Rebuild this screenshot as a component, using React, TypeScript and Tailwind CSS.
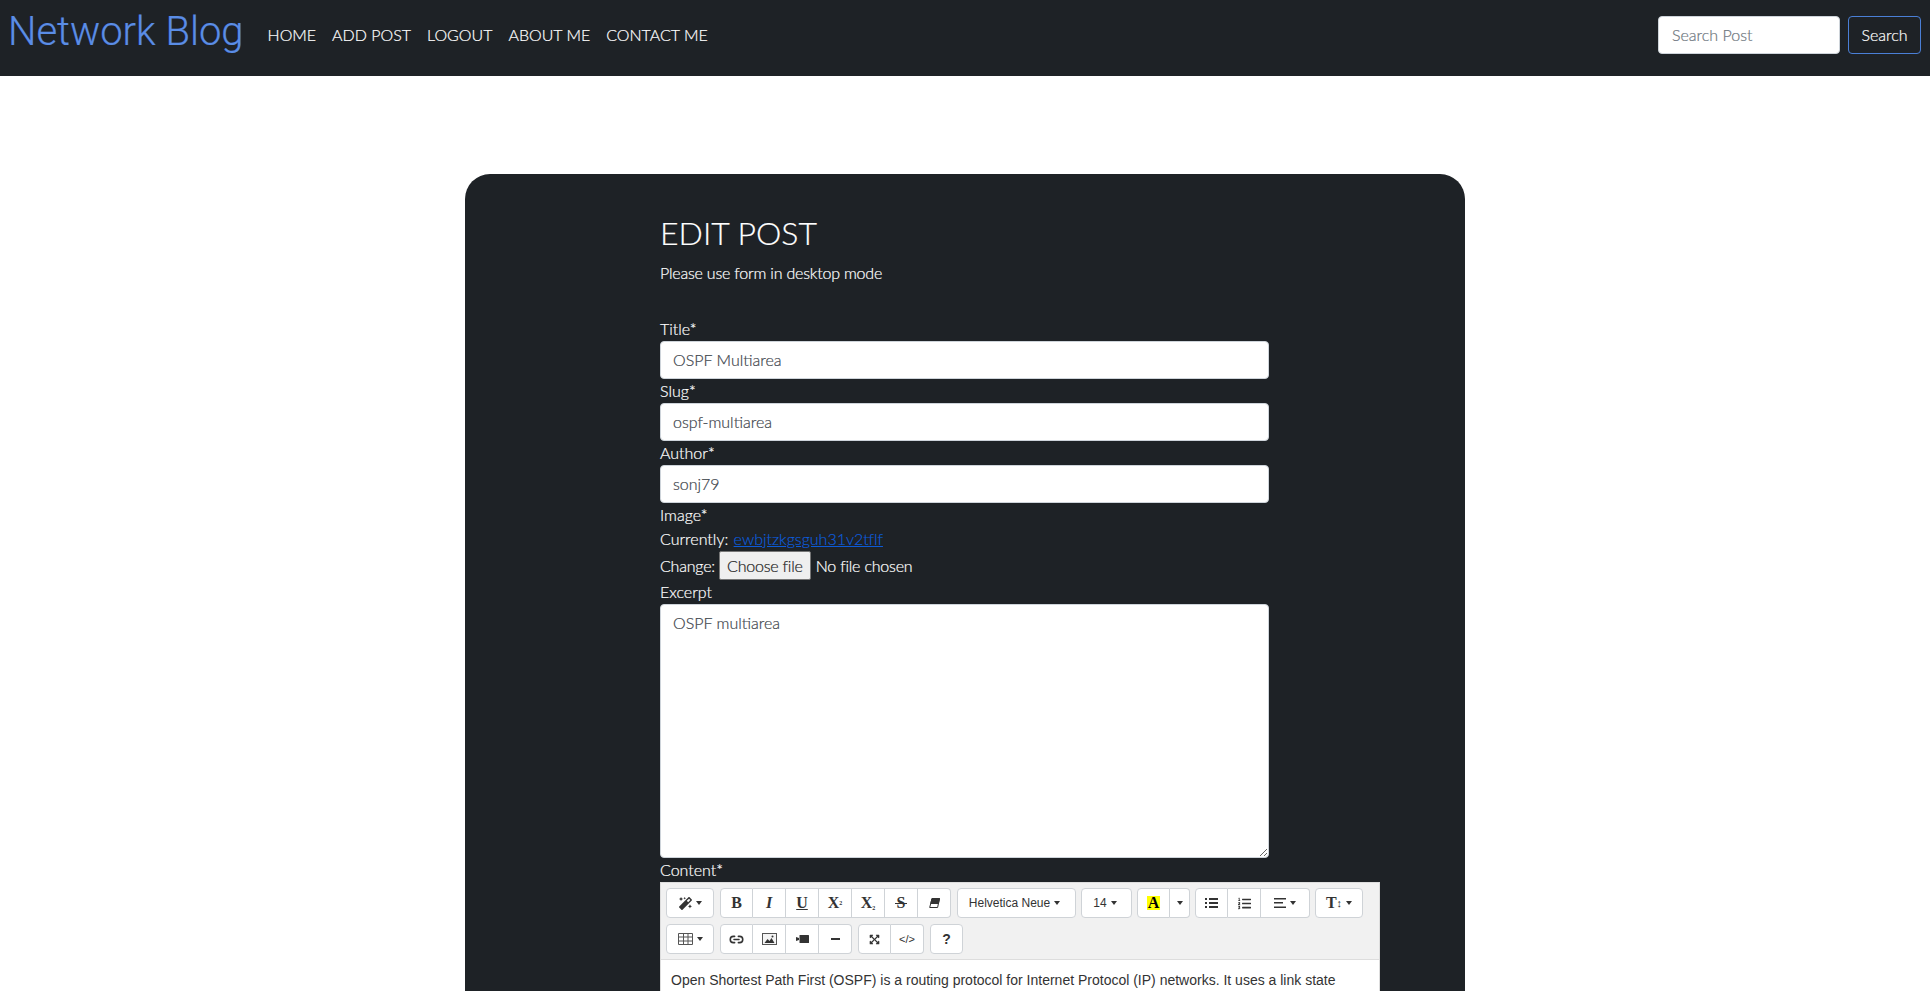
import React from 'react';
import { FaMagic, FaListOl, FaExpandArrowsAlt } from 'react-icons/fa';
import { Link2 } from 'lucide-react';

const Caret = () => (
    <span className="inline-block w-0 h-0 border-x-[3.5px] border-x-transparent border-t-[4px] border-t-[#333]" />
);

const serif = "font-['Liberation_Serif',serif] font-bold text-[#333] text-[16px]";
const sans = "font-['Liberation_Sans',sans-serif] font-normal text-[#333]";

const TableIcon = () => (
    <svg width="15" height="12" viewBox="0 0 15 12" fill="none" stroke="#555" strokeWidth="1">
        <path d="M.5.5h14v11H.5zM.5 4h14M.5 8h14M5.5.5v11M10 .5v11" />
    </svg>
);

const EraserIcon = () => (
    <svg width="11" height="10" viewBox="0 0 11 10">
        <path d="M3 .5h7.5L8.6 9.5H.7z" fill="#fff" stroke="#333" />
        <path d="M3 .5h7.5L9.4 5.5H1.8z" fill="#333" stroke="#333" />
    </svg>
);

const ImageIcon = () => (
    <svg width="15" height="12" viewBox="0 0 15 12">
        <rect x=".5" y=".5" width="14" height="11" fill="#f4f4f4" stroke="#555" />
        <path d="M2.5 10l3-4 2 2 2-3 3 5z" fill="#333" />
        <circle cx="10.5" cy="3.5" r="1" fill="#333" />
    </svg>
);

const VideoIcon = () => (
    <svg width="13" height="8" viewBox="0 0 13 8" fill="#333">
        <path d="M0 2l3 1v2L0 6z" />
        <rect x="3.5" y="0" width="9.5" height="8" rx=".5" />
    </svg>
);

const MinusIcon = () => (
    <svg width="9" height="2" viewBox="0 0 9 2" fill="#333"><rect width="9" height="2" /></svg>
);

const BulletsIcon = () => (
    <svg width="13" height="10" viewBox="0 0 13 10" fill="#333">
        <path d="M0 0h2v2H0zM0 4h2v2H0zM0 8h2v2H0zM4 0h9v2H4zM4 4h9v2H4zM4 8h9v2H4z" />
    </svg>
);

const AlignIcon = () => (
    <svg width="12" height="10" viewBox="0 0 12 10" fill="#333">
        <path d="M0 0h12v1.5H0zM0 4h9v1.5H0zM0 8.5h12V10H0z" />
    </svg>
);

// one toolbar button, group decides which corners are rounded
const Btn = ({ w = 'w-[33px]', first, last, children }: { w?: string; first?: boolean; last?: boolean; children: React.ReactNode }) => (
    <button
        type="button"
        className={`${w} h-[30px] shrink-0 flex items-center justify-center gap-1 bg-white border-y border-r border-[#cfd3d7] ${first ? 'border-l rounded-l-[4px]' : ''} ${last ? 'rounded-r-[4px]' : ''}`}
    >
        {children}
    </button>
);

const Field = ({ label, value }: { label: string; value: string }) => (
    <div>
        <label className="block h-[24px] leading-[24px]">{label}</label>
        <input
            readOnly
            value={value}
            className="block w-full h-[38px] px-[12px] pb-[2px] rounded-[4px] bg-white border border-[#ced4da] text-[#3d444b] outline-none"
        />
    </div>
);

const Toolbar = () => (
    <div className="bg-[#f1f1f1] border-b border-[#ddd] pl-[5px] pt-[5px] pb-[5px] flex flex-col gap-[6px] [-webkit-text-stroke:0]">
        <div className="flex">
            <Btn w="w-[48px]" first last><FaMagic size={13} className="text-[#333]" /><Caret /></Btn>
            <div className="flex ml-[6px]">
                <Btn first><span className={serif}>B</span></Btn>
                <Btn><span className={`${serif} italic`}>I</span></Btn>
                <Btn><span className={`${serif} underline`}>U</span></Btn>
                <Btn><span className={serif}>X<sup className="text-[6px]">2</sup></span></Btn>
                <Btn><span className={serif}>X<sub className="text-[6px]">2</sub></span></Btn>
                <Btn>
                    <span className={`${serif} relative px-[2px]`}>
                        S
                        <span className="absolute left-0 right-0 top-[50%] h-px bg-[#333]" />
                    </span>
                </Btn>
                <Btn last><EraserIcon /></Btn>
            </div>
            <div className="ml-[6px]">
                <Btn w="w-[119px] pr-[4px]" first last><span className={`${sans} text-[12px]`}>Helvetica Neue</span><Caret /></Btn>
            </div>
            <div className="ml-[5px]">
                <Btn w="w-[51px] pr-[3px]" first last><span className={`${sans} text-[12px]`}>14</span><Caret /></Btn>
            </div>
            <div className="flex ml-[5px]">
                <Btn first><span className={`${serif} leading-[14px] bg-[#ffff00] px-[1px] text-black`}>A</span></Btn>
                <Btn w="w-[20px]" last><Caret /></Btn>
            </div>
            <div className="flex ml-[5px]">
                <Btn first><BulletsIcon /></Btn>
                <Btn><FaListOl size={13} className="text-[#333]" /></Btn>
                <Btn w="w-[49px]" last><AlignIcon /><Caret /></Btn>
            </div>
            <div className="ml-[5px]">
                <Btn w="w-[48px]" first last>
                    <span className={`${serif} flex items-center`}>T<span className="text-[11px] font-normal">↕</span></span>
                    <Caret />
                </Btn>
            </div>
        </div>
        <div className="flex">
            <Btn w="w-[48px]" first last><TableIcon /><Caret /></Btn>
            <div className="flex ml-[6px]">
                <Btn first><Link2 size={15} strokeWidth={2.5} className="text-[#333]" /></Btn>
                <Btn><ImageIcon /></Btn>
                <Btn><VideoIcon /></Btn>
                <Btn last><MinusIcon /></Btn>
            </div>
            <div className="flex ml-[6px]">
                <Btn first><FaExpandArrowsAlt size={11} className="text-[#333]" /></Btn>
                <Btn last><span className={`${sans} text-[11px]`}>&lt;/&gt;</span></Btn>
            </div>
            <div className="ml-[6px]">
                <Btn first last><span className={`${sans} !font-bold text-[14px]`}>?</span></Btn>
            </div>
        </div>
    </div>
);

export default function App() {
    return (
        <div className="h-screen overflow-hidden bg-white font-['Lato',sans-serif] font-light text-[16px] leading-[24px] [-webkit-text-stroke:0.2px]">
            <nav className="h-[76px] bg-[#1e2226] flex items-center px-2 pb-[6px]">
                <a className="font-['Roboto',sans-serif] font-light text-[40px] leading-[48px] text-[#5a8de6] mr-6 mb-[7px]">Network Blog</a>
                <ul className="flex gap-[16px] text-white uppercase">
                    <li>Home</li>
                    <li>Add Post</li>
                    <li>Logout</li>
                    <li>About Me</li>
                    <li>Contact Me</li>
                </ul>
                <form className="ml-auto flex gap-2 pr-px">
                    <input
                        placeholder="Search Post"
                        className="w-[182px] h-[38px] px-[13px] pb-[2px] rounded-[4px] bg-white border border-[#ced4da] placeholder:text-[#6c757d] outline-none"
                    />
                    <button type="button" className="w-[73px] h-[38px] rounded-[4px] border border-[#4a7fd6] text-white">Search</button>
                </form>
            </nav>

            <main className="w-[1000px] mx-auto mt-[98px] rounded-t-[25px] bg-[#1e2226] text-white pl-[195px] pt-[37px] pb-20">
                <div className="w-[609px]">
                    <h1 className="text-[32px] leading-[44px] uppercase">Edit Post</h1>
                    <p className="mt-[6px] mb-[32px] h-[24px] tracking-[-0.2px]">Please use form in desktop mode</p>

                    <Field label="Title*" value="OSPF Multiarea" />
                    <Field label="Slug*" value="ospf-multiarea" />
                    <Field label="Author*" value="sonj79" />

                    <div className="h-[24px]">Image*</div>
                    <div className="h-[24px]">
                        Currently: <a className="ml-px text-[#0d5bd8] underline">ewbjtzkgsguh31v2tflf</a>
                    </div>
                    <div className="h-[29px] flex items-center tracking-[-0.2px]">
                        Change:
                        <button type="button" className="ml-[4px] h-[29px] px-[7px] bg-[#efefef] border border-[#767676] rounded-[2px] text-[#222]">Choose file</button>
                        <span className="ml-[5px]">No file chosen</span>
                    </div>

                    <div className="h-[24px]">Excerpt</div>
                    <textarea
                        readOnly
                        value="OSPF multiarea"
                        className="block w-full h-[254px] px-[12px] py-[6px] rounded-[4px] bg-white border border-[#ced4da] text-[#3d444b] outline-none"
                    />

                    <div className="h-[24px]">Content*</div>
                    <div className="w-[720px] bg-white border border-[#ddd]">
                        <Toolbar />
                        <div className="px-[10px] py-[10px] font-['Liberation_Sans',sans-serif] font-normal text-[14px] leading-[20px] text-[#333] h-[400px] [-webkit-text-stroke:0]">
                            Open Shortest Path First (OSPF) is a routing protocol for Internet Protocol (IP) networks. It uses a link state
                        </div>
                    </div>
                </div>
            </main>
        </div>
    );
}
